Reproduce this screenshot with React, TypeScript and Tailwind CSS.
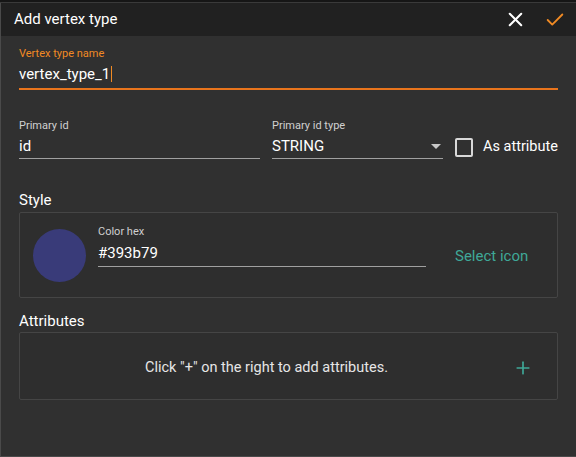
import { X, Check, Plus } from "lucide-react";

export default function App() {
  return (
    <div
      className="w-[576px] h-[457px] bg-[#1c1c1c] text-white overflow-hidden"
      style={{ fontFamily: "Roboto, 'Liberation Sans', sans-serif" }}
    >
      <div className="h-[2px] bg-[#161616]" />
      <div className="h-[1px] bg-[#3a3a3a]" />
      <div className="flex flex-col h-[454px] border-l border-b border-[#4a4a4a] bg-[#303030]">
        {/* Header */}
        <div className="flex items-center h-[33px] bg-[#212121] pl-[13px] pr-[10px]">
          <div className="text-[15px] flex-1">Add vertex type</div>
          <X size={23} strokeWidth={2.2} className="text-white mr-[17px]" />
          <Check size={22} strokeWidth={2} className="text-[#f08a24]" />
        </div>

        <div className="flex flex-col px-[18px]">
          {/* Vertex type name */}
          <div className="mt-[11px]">
            <div className="text-[11px] text-[#f08a24] leading-[13px]">Vertex type name</div>
            <div className="text-[15px] leading-[18px] mt-[5px] flex items-center">
              vertex_type_1<span className="inline-block w-[1px] h-[16px] bg-[#f08a24] ml-[1px]" />
            </div>
            <div className="h-[2px] bg-[#e8741c] mt-[5px]" />
          </div>

          {/* Primary id row */}
          <div className="flex items-end mt-[29px]">
            <div className="w-[241px] shrink-0">
              <div className="text-[11px] text-[#d0d0d0] leading-[13px]">Primary id</div>
              <div className="text-[15px] leading-[18px] mt-[5px]">id</div>
              <div className="h-[1px] bg-[#a0a0a0] mt-[3px]" />
            </div>
            <div className="w-[171px] ml-[12px] shrink-0">
              <div className="text-[11px] text-[#d0d0d0] leading-[13px]">Primary id type</div>
              <div className="flex items-center text-[15px] leading-[18px] mt-[5px]">
                <span className="flex-1">STRING</span>
                <span className="w-0 h-0 border-l-[5px] border-r-[5px] border-t-[5px] border-l-transparent border-r-transparent border-t-[#c8c8c8] mr-[2px]" />
              </div>
              <div className="h-[1px] bg-[#a0a0a0] mt-[3px]" />
            </div>
            <div className="flex items-center ml-[12px] mb-[1px] whitespace-nowrap shrink-0">
              <div className="w-[18px] h-[19px] border-2 border-[#d8d8d8] rounded-[2px]" />
              <div className="text-[14.5px] ml-[10px]">As attribute</div>
            </div>
          </div>

          {/* Style */}
          <div className="text-[15px] leading-[18px] mt-[32px]">Style</div>
          <div className="flex items-center h-[86px] mt-[3px] border border-[#454545] rounded-[2px] bg-[#2e2e2e]">
            <div className="w-[53px] h-[53px] rounded-full bg-[#393b79] ml-[13px]" />
            <div className="w-[328px] ml-[12px] self-start mt-[12px]">
              <div className="text-[11px] text-[#d0d0d0] leading-[13px]">Color hex</div>
              <div className="text-[15px] leading-[18px] mt-[6px]">#393b79</div>
              <div className="h-[1px] bg-[#a0a0a0] mt-[4px]" />
            </div>
            <div className="text-[15px] text-[#3fa898] ml-[29px] mt-[2px]">Select icon</div>
          </div>

          {/* Attributes */}
          <div className="text-[15px] leading-[18px] mt-[14px]">Attributes</div>
          <div className="flex items-center h-[68px] mt-[2px] border border-[#454545] rounded-[2px] bg-[#2e2e2e]">
            <div className="flex-1 text-center text-[14.5px] text-[#e6e6e6] mt-[3px]">
              Click "+" on the right to add attributes.
            </div>
            <Plus size={20} strokeWidth={2} className="text-[#3fa898] mr-[24px] mt-[3px]" />
          </div>
        </div>
      </div>
    </div>
  );
}
